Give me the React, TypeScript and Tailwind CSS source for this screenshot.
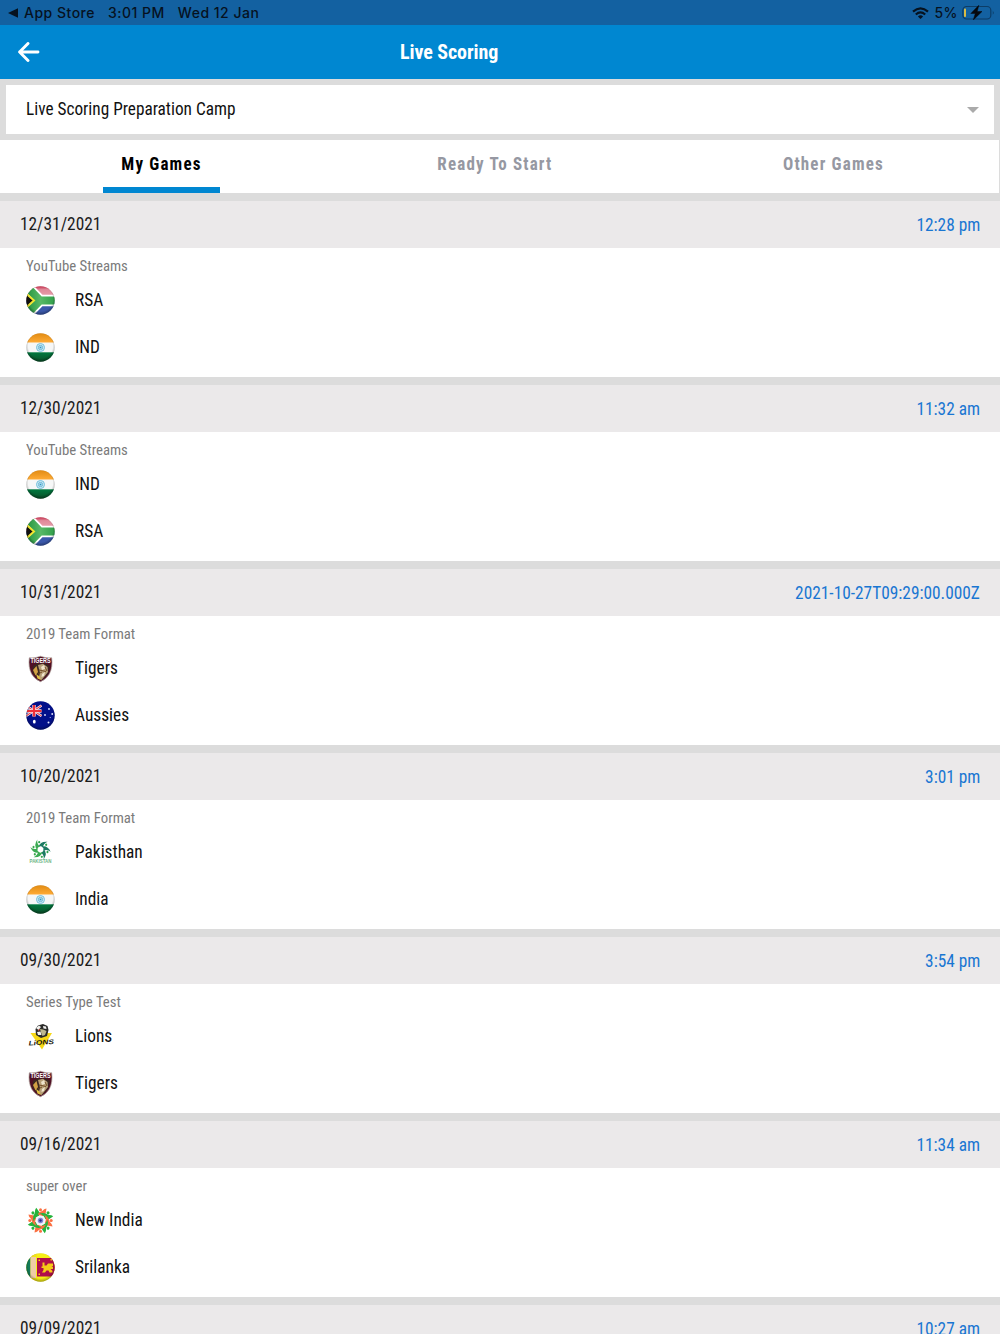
import React from 'react';

type TeamIcon = 'rsa' | 'india' | 'tigers' | 'australia' | 'pakistan' | 'lions' | 'newIndia' | 'srilanka';

interface Team {
  name: string;
  icon: TeamIcon;
}

interface Game {
  date: string;
  time: string;
  series: string;
  teams: Team[];
}

const GAMES: Game[] = [
  { date: '12/31/2021', time: '12:28 pm', series: 'YouTube Streams', teams: [{ name: 'RSA', icon: 'rsa' }, { name: 'IND', icon: 'india' }] },
  { date: '12/30/2021', time: '11:32 am', series: 'YouTube Streams', teams: [{ name: 'IND', icon: 'india' }, { name: 'RSA', icon: 'rsa' }] },
  { date: '10/31/2021', time: '2021-10-27T09:29:00.000Z', series: '2019 Team Format', teams: [{ name: 'Tigers', icon: 'tigers' }, { name: 'Aussies', icon: 'australia' }] },
  { date: '10/20/2021', time: '3:01 pm', series: '2019 Team Format', teams: [{ name: 'Pakisthan', icon: 'pakistan' }, { name: 'India', icon: 'india' }] },
  { date: '09/30/2021', time: '3:54 pm', series: 'Series Type Test', teams: [{ name: 'Lions', icon: 'lions' }, { name: 'Tigers', icon: 'tigers' }] },
  { date: '09/16/2021', time: '11:34 am', series: 'super over', teams: [{ name: 'New India', icon: 'newIndia' }, { name: 'Srilanka', icon: 'srilanka' }] },
  { date: '09/09/2021', time: '10:27 am', series: '', teams: [] },
];

const SPIN_8 = [0, 45, 90, 135, 180, 225, 270, 315];
const SPIN_6 = [0, 60, 120, 180, 240, 300];

// Glossy round badge shared by all the country flags
function RoundFlag({ id, children }: { id: string; children: React.ReactNode }) {
  return (
    <svg viewBox="0 0 29 29" className="size-[29px]">
      <defs>
        <clipPath id={`${id}-clip`}>
          <circle cx="14.5" cy="14.5" r="14.2" />
        </clipPath>
        <radialGradient id={`${id}-edge`} cx="50%" cy="45%" r="56%">
          <stop offset="0.75" stopColor="#000" stopOpacity="0" />
          <stop offset="1" stopColor="#000" stopOpacity="0.4" />
        </radialGradient>
      </defs>
      <g clipPath={`url(#${id}-clip)`}>
        {children}
        <rect width="29" height="29" fill={`url(#${id}-edge)`} />
      </g>
    </svg>
  );
}

function IndiaFlag({ id }: { id: string }) {
  return (
    <RoundFlag id={id}>
      <linearGradient id={`${id}-top`} x1="0" y1="0" x2="0" y2="1">
        <stop offset="0" stopColor="#e08a12" />
        <stop offset="1" stopColor="#ffab35" />
      </linearGradient>
      <linearGradient id={`${id}-bottom`} x1="0" y1="0" x2="0" y2="1">
        <stop offset="0" stopColor="#00793f" />
        <stop offset="1" stopColor="#0a4f28" />
      </linearGradient>
      <rect width="29" height="29" fill="#f6f7f7" />
      <rect width="29" height="9.5" fill={`url(#${id}-top)`} />
      <rect y="19.3" width="29" height="9.7" fill={`url(#${id}-bottom)`} />
      <circle cx="14.5" cy="14.5" r="4" fill="#d3ecf5" stroke="#72bfdc" strokeWidth="1" />
      <circle cx="14.5" cy="14.5" r="2.2" fill="#a8d8ea" stroke="#66b4d6" strokeWidth="0.8" />
      <circle cx="14.5" cy="14.5" r="0.8" fill="#2f94c4" />
    </RoundFlag>
  );
}

function SouthAfricaFlag({ id }: { id: string }) {
  return (
    <RoundFlag id={id}>
      <linearGradient id={`${id}-red`} x1="0" y1="0" x2="0" y2="1">
        <stop offset="0" stopColor="#c22745" />
        <stop offset="0.25" stopColor="#e08a9a" />
        <stop offset="1" stopColor="#eba9b3" />
      </linearGradient>
      <linearGradient id={`${id}-green`} gradientUnits="userSpaceOnUse" x1="0" y1="0" x2="29" y2="0">
        <stop offset="0" stopColor="#22933d" />
        <stop offset="0.5" stopColor="#58b966" />
        <stop offset="1" stopColor="#2f9e49" />
      </linearGradient>
      <rect width="29" height="14.5" fill={`url(#${id}-red)`} />
      <rect y="14.5" width="29" height="14.5" fill="#3a58aa" />
      <path d="M1 1 14 14.5H29M14 14.5 1 28" fill="none" stroke="#fff" strokeWidth="11.5" />
      <path d="M1 1 14 14.5H29M14 14.5 1 28" fill="none" stroke={`url(#${id}-green)`} strokeWidth="8" />
      <path d="M-2 5.5 8 14.5-2 23.5Z" fill="#111" stroke="#f0e531" strokeWidth="2" />
    </RoundFlag>
  );
}

function AustraliaFlag({ id }: { id: string }) {
  return (
    <RoundFlag id={id}>
      <rect width="29" height="29" fill="#03108a" />
      <path d="M0 4.5 15.5 15M15.5 4.5 0 15" stroke="#fff" strokeWidth="2.4" />
      <path d="M0 4.5 15.5 15M15.5 4.5 0 15" stroke="#e44a54" strokeWidth="1.1" />
      <path d="M8 4V15.5M0 10H15.5" stroke="#ffd9dc" strokeWidth="3.4" />
      <path d="M8 4V15.5M0 10H15.5" stroke="#ee3039" strokeWidth="2.2" />
      <ellipse cx="8.3" cy="20.7" rx="1.4" ry="1.9" fill="#fff" />
      <circle cx="23" cy="8" r="0.9" fill="#e4e8ff" />
      <circle cx="19" cy="14" r="0.9" fill="#e4e8ff" />
      <circle cx="26.2" cy="13" r="0.9" fill="#e4e8ff" />
      <circle cx="24.2" cy="16.5" r="0.5" fill="#e4e8ff" />
      <circle cx="22.5" cy="21.5" r="1" fill="#e4e8ff" />
    </RoundFlag>
  );
}

function SrilankaFlag({ id }: { id: string }) {
  return (
    <RoundFlag id={id}>
      <rect width="29" height="29" fill="#f6ee16" />
      <rect width="4.5" height="29" fill="#137c58" />
      <rect x="4.5" width="5.5" height="29" fill="#efcda5" />
      <path d="M4.5 0H11V4H4.5ZM4.5 25H11V29H4.5Z" fill="#f1e41c" />
      <rect x="11" y="5" width="18" height="18.5" fill="#b00d4b" />
      <path d="M16.5 9.5h2v3h2l1.500-2h5v2.500l-1.500 1h1.500v2h-2.500l2 2v1.500h-3l-1-2h-2l-1.500 2h-3l1.500-2.500v-2h-2v-1.500h1z" fill="#f5ca16" />
      <path d="M12.500 6.500h1.500v1.500h-1.500zM12.500 20.500h1.500v1.500h-1.500zM24.500 6h1.500v1.500h-1.500z" fill="#f5ca16" />
    </RoundFlag>
  );
}

function TigersCrest() {
  return (
    <svg viewBox="0 0 29 29" className="size-[29px]">
      <path d="M3.3 3.8Q9 4.5 14.5 2.2 20 4.5 25.7 3.8 27 13 23.4 20 20 25.5 14.5 27.7 9 25.5 5.6 20 2 13 3.3 3.8Z" fill="#511025" stroke="#b4a8a0" strokeWidth="0.7" />
      <path d="M7 12 11 9.5 20 9.5 24 12 22 20 16 26 12 25 6.5 18.5Z" fill="#3b2721" />
      <path d="M12 11 17 9.8 21.5 13 22 18 18 23 15.5 26 12.5 24 14 19Z" fill="#b8a077" />
      <path d="M7 16 10.5 12 12 18 9.5 21.5Z" fill="#d2a044" />
      <path d="M10 20 13 22 15 26 11.5 24.5Z" fill="#e2be43" />
      <path d="M15 13 18 11 19.5 14.5 16 16ZM16 20 19 18 18 22 15.5 23Z" fill="#f0e5cd" />
      <path d="M13 16 20 17.5M19 13 21 17M12 20 16 18" stroke="#6c451d" strokeWidth="0.9" />
      <text x="4.5" y="9.4" textLength="20" lengthAdjust="spacingAndGlyphs" className="fill-white font-['Liberation_Sans'] text-[6.4px] font-bold">TIGERS</text>
    </svg>
  );
}

function PakistanLogo() {
  return (
    <svg viewBox="0 0 29 29" className="size-[29px]">
      {SPIN_6.map((angle, i) => (
        <g key={angle} transform={`rotate(${angle} 14.5 11.5)`}>
          <path d="M12.500 9Q14 3.200 21.500 3.800 17.600 5.200 16.800 9.500 15 7.500 12.500 9Z" fill={i < 3 ? '#1b7a63' : '#3bab52'} />
          <circle cx="13.200" cy="4.200" r="1.100" fill={i < 3 ? '#2ca44b' : '#37a74d'} />
        </g>
      ))}
      <text x="3.5" y="25" textLength="22" lengthAdjust="spacingAndGlyphs" className="fill-[#6db587] font-['Liberation_Sans'] text-[4.8px] font-bold">PAKISTAN</text>
    </svg>
  );
}

function LionsLogo() {
  return (
    <svg viewBox="0 0 29 29" className="size-[29px]">
      <path d="M4.500 11 26 11 16 27.500Z" fill="#f7d817" />
      <path d="M9.500 7 12 3.500 17 2 21.500 4 22.500 8 21 14 15 16 10 13Z" fill="#2a2a29" />
      <path d="M10 6 13 3.500 15 5 12.500 8ZM17 4 20 4.500 20.500 7 17.500 6.500ZM11 10 14.500 9.500 15.500 13 12 13Z" fill="#f2f1ee" />
      <path d="M14 7 17 7.500 20.500 9 19 13 16.500 14 15 10.500Z" fill="#bcb78f" />
      <path d="M12 8.500 14 7.500" stroke="#cf4734" strokeWidth="1" />
      <text x="2.500" y="22.800" textLength="25.500" lengthAdjust="spacingAndGlyphs" transform="rotate(-4 14 21)" className="fill-[#15150c] font-['Liberation_Sans'] text-[6.6px] font-bold italic">LiONS</text>
    </svg>
  );
}

function NewIndiaLogo() {
  return (
    <svg viewBox="0 0 29 29" className="size-[29px]">
      {SPIN_8.map((angle, i) => (
        <g key={angle} transform={`rotate(${angle} 14.5 14.5)`} fill={i % 2 ? '#26b33c' : '#fb7042'}>
          <path d="M9 10.500Q11.500 4.500 20.500 5 17 7 17 10.300 13 8 9 10.500Z" />
          <path d="M14.500 8Q16.500 3 20.500 2.500L19.500 8Z" />
          <circle cx="14.500" cy="3.800" r="1.500" />
        </g>
      ))}
      <circle cx="14.500" cy="14.500" r="4.200" fill="#eceeff" />
      <circle cx="14.500" cy="14.500" r="2.700" fill="#8487d2" />
      <circle cx="14.500" cy="14.500" r="1.200" fill="#26288b" />
    </svg>
  );
}

function TeamLogo({ icon, id }: { icon: TeamIcon; id: string }) {
  switch (icon) {
    case 'rsa':
      return <SouthAfricaFlag id={id} />;
    case 'india':
      return <IndiaFlag id={id} />;
    case 'australia':
      return <AustraliaFlag id={id} />;
    case 'srilanka':
      return <SrilankaFlag id={id} />;
    case 'tigers':
      return <TigersCrest />;
    case 'pakistan':
      return <PakistanLogo />;
    case 'lions':
      return <LionsLogo />;
    default:
      return <NewIndiaLogo />;
  }
}

function StatusBar() {
  return (
    <div className="flex h-[25px] items-center bg-[#1361a1] pl-[8px] pr-[5px] font-['Inter',sans-serif] text-[14px] font-medium tracking-[0.5px] text-[#06121f]">
      <svg viewBox="0 0 10 10" className="mr-[6px] size-[10px]">
        <path d="M0 5 10 0.3V9.7Z" fill="currentColor" />
      </svg>
      <span className="mr-[13px]">App Store</span>
      <span className="mr-[13px]">3:01 PM</span>
      <span>Wed 12 Jan</span>
      <svg viewBox="0 0 17 12" className="ml-auto mr-[5px] h-[12px] w-[17px]" fill="none" stroke="currentColor" strokeWidth="2.2">
        <path d="M1 4.6Q8.5 -2 16 4.6" />
        <path d="M3.8 7.5Q8.5 3.4 13.2 7.5" />
        <path d="M8.5 12 5.9 9.4Q8.5 7.3 11.1 9.4Z" fill="currentColor" stroke="none" />
      </svg>
      <span className="mr-[4px]">5%</span>
      <svg viewBox="0 0 33 15" className="h-[15px] w-[33px]">
        <rect x="0.8" y="1.5" width="28" height="12.5" rx="3.8" fill="none" stroke="#0c3d67" strokeWidth="1.2" />
        <path d="M30.8 5.5Q32.6 7.5 30.8 9.7Z" fill="#0c3d67" />
        <rect x="2" y="3.5" width="2" height="8.5" rx="0.8" fill="#d8bb45" />
        <path d="M16.8 0.3 8.8 8.5H13.3L11.3 14.9 20 6.5H15.2Z" fill="#06080c" stroke="#06080c" strokeWidth="0.5" />
      </svg>
    </div>
  );
}

function GameCard({ game, index }: { game: Game; index: number }) {
  return (
    <section className="mb-[8px] h-[176px] bg-white">
      <header className="flex h-[47px] items-center justify-between bg-[#ebe9ea] px-[20px] text-[18px]">
        <span className="origin-left scale-x-[0.963] pb-[2px] text-[#1b1b1b]">{game.date}</span>
        <span className="origin-right scale-x-[0.963] text-[#1976d2]">{game.time}</span>
      </header>
      <div className="px-[26px] pt-[7px]">
        <p className="h-[22px] origin-left scale-x-[0.985] text-[15px] leading-[23px] text-[#7b7b7b]">{game.series}</p>
        {game.teams.map((team, i) => (
          <div key={team.name} className="flex h-[47px] items-center gap-[20px]">
            <TeamLogo icon={team.icon} id={`g${index}t${i}`} />
            <span className="origin-left scale-x-[0.963] pb-[2px] text-[18px] text-[#111]">{team.name}</span>
          </div>
        ))}
      </div>
    </section>
  );
}

export default function App() {
  return (
    <div className="h-[1334px] w-[1000px] overflow-hidden bg-[#dcdcdc] font-['Roboto_Condensed','Roboto',sans-serif] font-stretch-condensed">
      <StatusBar />
      <div className="flex h-[54px] items-center bg-[#0087d1] text-white">
        <svg viewBox="0 0 22 20" className="ml-[18px] h-[20px] w-[22px]" fill="none" stroke="currentColor" strokeWidth="2.9" strokeLinecap="round" strokeLinejoin="round">
          <path d="M10 1.5 1.6 10 10 18.5M1.6 10H20" />
        </svg>
        <h1 className="ml-[360px] text-[20px] font-bold tracking-[-0.08px]">Live Scoring</h1>
      </div>
      <div className="mx-[6px] mt-[6px] flex h-[49px] items-center justify-between bg-white pl-[20px] pr-[15px]">
        <span className="origin-left scale-x-[0.959] pb-[2px] text-[18px] text-[#111]">Live Scoring Preparation Camp</span>
        <svg viewBox="0 0 12 6" className="h-[6px] w-[12px]">
          <path d="M0 0H12L6 6Z" fill="#aaa" />
        </svg>
      </div>
      <nav className="mr-px mt-[6px] flex h-[53px] bg-white pl-[103px] text-[18px] font-bold tracking-[1.25px]">
        <button className="h-[53px] w-[117px] border-b-[6px] border-[#0087d1] text-black">
          <span className="inline-block scale-x-[0.945]">My Games</span>
        </button>
        <button className="ml-[197px] h-[53px] w-[155px] border-b-[6px] border-transparent text-[#9698a2]">
          <span className="inline-block scale-x-[0.945]">Ready To Start</span>
        </button>
        <button className="ml-[193px] h-[53px] w-[137px] border-b-[6px] border-transparent text-[#9698a2]">
          <span className="inline-block scale-x-[0.945]">Other Games</span>
        </button>
      </nav>
      <main className="pt-[8px]">
        {GAMES.map((game, i) => (
          <GameCard key={game.date} game={game} index={i} />
        ))}
      </main>
    </div>
  );
}
